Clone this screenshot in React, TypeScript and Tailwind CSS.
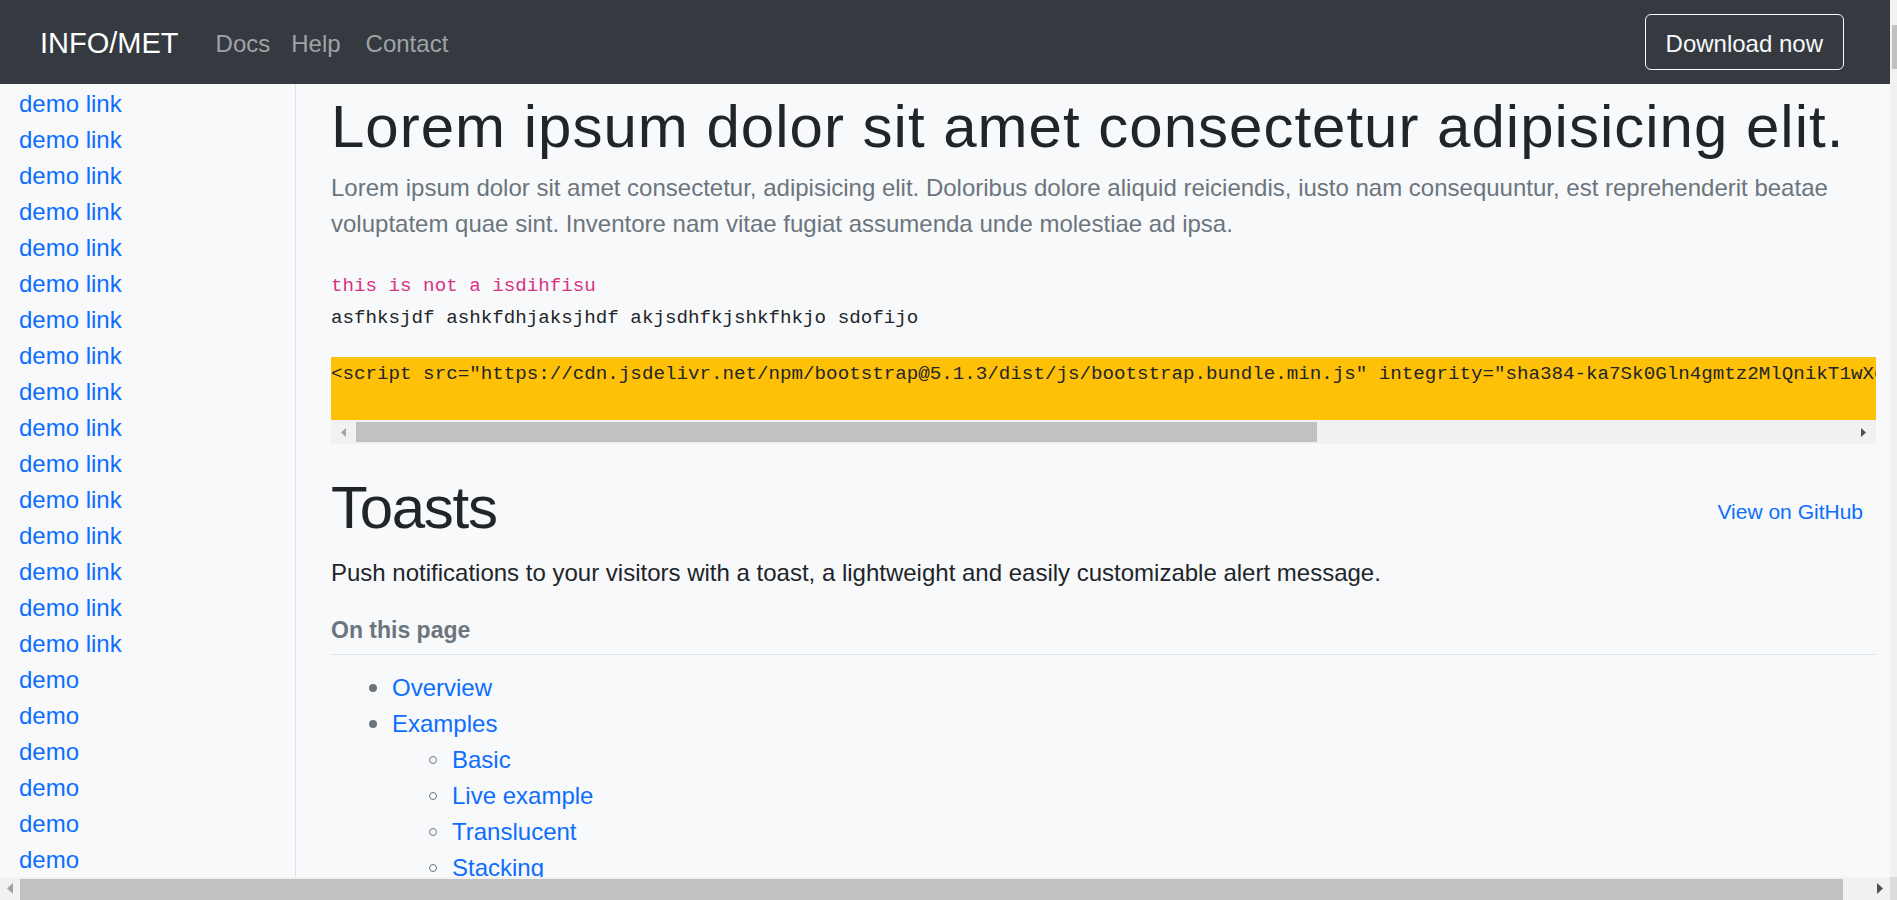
import React from "react";

function Arrow({ dir, color, w = 6, h = 11 }: { dir: "left" | "right"; color: string; w?: number; h?: number }) {
  const pts = dir === "left" ? `${w},0 0,${h / 2} ${w},${h}` : `0,0 ${w},${h / 2} 0,${h}`;
  return (
    <svg width={w} height={h} viewBox={`0 0 ${w} ${h}`}>
      <polygon points={pts} fill={color} />
    </svg>
  );
}

const sidebarItems = [
  ...Array(16).fill("demo link"),
  ...Array(8).fill("demo"),
];

const scriptText =
  '<script src="https://cdn.jsdelivr.net/npm/bootstrap@5.1.3/dist/js/bootstrap.bundle.min.js" integrity="sha384-ka7Sk0Gln4gmtz2MlQnikT1wXgYsOg+OMhuP+IlRH9sENBO0LRn5q+8nbTov4+1p" crossorigin="anonymous"></script>';

export default function App() {
  return (
    <div className="flex h-[900px] w-[1897px] overflow-hidden bg-[#f8f9fa] font-['Liberation_Sans',Arial,sans-serif] text-[24px] leading-[36px] text-[#212529]">
      <div className="flex w-[1890px] shrink-0 flex-col">
        {/* Navbar */}
        <nav className="flex h-[84px] shrink-0 items-center bg-[#343a40] pl-[40px] pr-[46px]">
          <span className="pt-[2px] text-[29px] leading-[44px] text-white">INFO/MET</span>
          <div className="ml-[37px] flex items-center pt-[4px] text-[#a0a3a6]">
            <a className="mr-[21px]">Docs</a>
            <a className="mr-[25px]">Help</a>
            <a>Contact</a>
          </div>
          <button className="ml-auto h-[56px] rounded-[6px] border border-[#f8f9fa] px-[20px] pt-[4px] text-[24px] leading-[36px] text-[#f8f9fa]">
            Download now
          </button>
        </nav>

        {/* Body */}
        <div className="flex min-h-0 flex-1">
          <aside className="w-[296px] shrink-0 overflow-hidden border-r border-[#dee2e6] pl-[19px] pt-[2px]">
            <ul className="flex flex-col">
              {sidebarItems.map((t, i) => (
                <li key={i} className="text-[#0d6efd]">
                  <a>{t}</a>
                </li>
              ))}
            </ul>
          </aside>

          <main className="min-w-0 flex-1 overflow-hidden pl-[35px] pr-[14px] pt-[7px]">
            <h1 className="mb-[7px] whitespace-nowrap text-[60px] leading-[72px] tracking-[1px] text-[#212529]">
              Lorem ipsum dolor sit amet consectetur adipisicing elit.
            </h1>
            <p className="mb-[28px] text-[#6c757d]">
              Lorem ipsum dolor sit amet consectetur, adipisicing elit. Doloribus dolore aliquid reiciendis, iusto nam
              consequuntur, est reprehenderit beatae voluptatem quae sint. Inventore nam vitae fugiat assumenda unde
              molestiae ad ipsa.
            </p>
            <div className="font-['Liberation_Mono',monospace] text-[19.2px] leading-[32px]">
              <div className="text-[#d63384]">this is not a isdihfisu</div>
              <div className="text-[#212529]">asfhksjdf ashkfdhjaksjhdf akjsdhfkjshkfhkjo sdofijo</div>
            </div>

            <div className="mt-[23px]">
              <div className="h-[63px] overflow-hidden whitespace-pre bg-[#ffc107] pt-[1px] font-['Liberation_Mono',monospace] text-[19.2px] leading-[32px] text-[#212529]">
                {scriptText}
              </div>
              <div className="flex h-[24px] bg-[#f1f1f1]">
                <div className="flex w-[25px] items-center justify-center">
                  <Arrow dir="left" color="#a3a3a3" w={5} h={9} />
                </div>
                <div className="my-[2px] w-[961px] bg-[#c1c1c1]" />
                <div className="flex-1" />
                <div className="flex w-[25px] items-center justify-center">
                  <Arrow dir="right" color="#505050" w={5} h={9} />
                </div>
              </div>
            </div>

            <div className="mt-[28px] flex items-center justify-between">
              <h1 className="text-[60px] leading-[72px] tracking-[-1.3px] text-[#212529]">Toasts</h1>
              <a className="mr-[13px] mt-[8px] text-[21px] leading-[32px] text-[#0d6efd]">View on GitHub</a>
            </div>
            <p className="mt-[11px]">
              Push notifications to your visitors with a toast, a lightweight and easily customizable alert message.
            </p>
            <div className="mt-[21px] border-b border-[#dee2e6] pb-[6px] text-[23px] font-bold leading-[36px] text-[#6c757d]">
              On this page
            </div>
            <ul className="mt-[15px] flex flex-col">
              <li className="flex items-center">
                <span className="ml-[38px] mr-[15px] h-[8px] w-[8px] rounded-full bg-[#6c757d]" />
                <a className="text-[#0d6efd]">Overview</a>
              </li>
              <li className="flex items-center">
                <span className="ml-[38px] mr-[15px] h-[8px] w-[8px] rounded-full bg-[#6c757d]" />
                <a className="text-[#0d6efd]">Examples</a>
              </li>
              {["Basic", "Live example", "Translucent", "Stacking", "Custom content", "Color schemes"].map((t) => (
                <li key={t} className="flex items-center">
                  <span className="ml-[98px] mr-[15px] h-[8px] w-[8px] rounded-full border border-[#6c757d]" />
                  <a className="text-[#0d6efd]">{t}</a>
                </li>
              ))}
            </ul>
          </main>
        </div>

        {/* Page horizontal scrollbar */}
        <div className="flex h-[23px] shrink-0 bg-[#f1f1f1]">
          <div className="flex w-[20px] items-center justify-center">
            <Arrow dir="left" color="#a3a3a3" />
          </div>
          <div className="mt-[2px] w-[1823px] bg-[#c1c1c1]" />
          <div className="flex-1" />
          <div className="flex w-[20px] items-center justify-center">
            <Arrow dir="right" color="#505050" />
          </div>
        </div>
      </div>

      {/* Page vertical scrollbar */}
      <div className="flex w-[7px] shrink-0 flex-col">
        <div className="flex-1 bg-[#f1f1f1] pt-[25px]">
          <div className="ml-[2px] h-[44px] bg-[#c1c1c1]" />
        </div>
        <div className="h-[23px] bg-[#dcdcdc]" />
      </div>
    </div>
  );
}
